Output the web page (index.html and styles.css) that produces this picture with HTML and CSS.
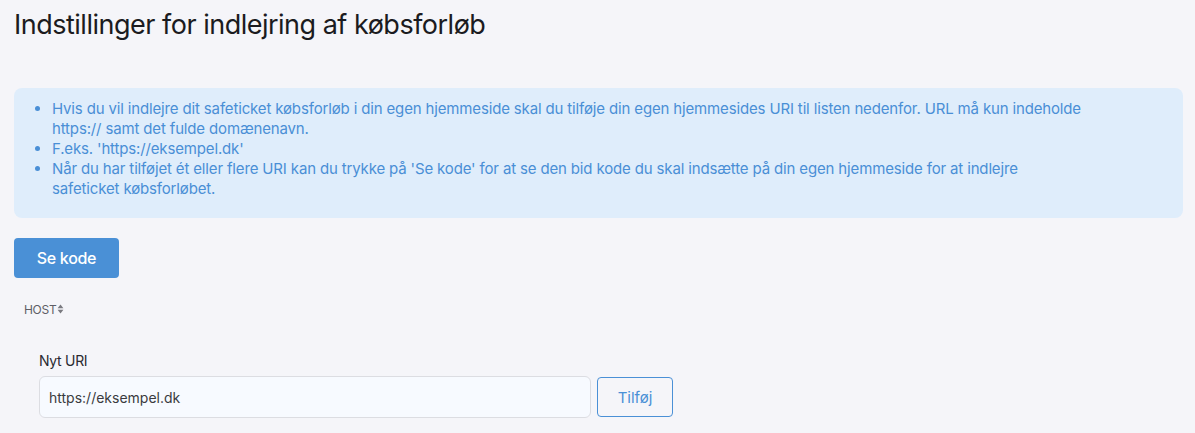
FILE: index.html
```html
<!DOCTYPE html>
<html lang="da">
<head>
<meta charset="utf-8">
<title>Indstillinger for indlejring af købsforløb</title>
<link rel="stylesheet" href="styles.css">
</head>
<body>
<main class="page">
  <h1 class="title">Indstillinger for indlejring af købsforløb</h1>
  <div class="alert">
    <ul class="alert-list">
      <li>Hvis du vil indlejre dit safeticket købsforløb i din egen hjemmeside skal du tilføje din egen hjemmesides URI til listen nedenfor. URL må kun indeholde https:// samt det fulde domænenavn.</li>
      <li>F.eks. 'https://eksempel.dk'</li>
      <li>Når du har tilføjet ét eller flere URI kan du trykke på 'Se kode' for at se den bid kode du skal indsætte på din egen hjemmeside for at indlejre safeticket købsforløbet.</li>
    </ul>
  </div>
  <button class="btn-primary" type="button">Se kode</button>
  <div class="table-head">
    <span class="th">HOST</span>
    <svg class="sort-icon" viewBox="0 0 8 12" width="7" height="10" aria-hidden="true"><path d="M4 0.5 L7.5 5 H0.5 Z M4 11.5 L7.5 7 H0.5 Z" fill="#7a7a80"/></svg>
  </div>
  <form class="new-uri">
    <label class="label" for="uri">Nyt URI</label>
    <div class="input-row">
      <input class="input" id="uri" type="text" placeholder="https://eksempel.dk">
      <button class="btn-outline" type="button">Tilføj</button>
    </div>
  </form>
</main>
</body>
</html>
```

FILE: styles.css
```css
* { box-sizing: border-box; }
html, body { margin: 0; padding: 0; }
body {
  background: #f5f5f9;
  font-family: "Inter", "Noto Sans", sans-serif;
  color: #1d1d22;
}
.page {
  padding: 8px 12px 0 14px;
}
.title {
  margin: 0;
  font-weight: 400;
  font-size: 27px;
  line-height: 34px;
  letter-spacing: -0.5px;
  color: #1b1b20;
}
.alert {
  margin-top: 46px;
  background: #dfedfb;
  border-radius: 8px;
  padding: 11px 95px 19px 20px;
  color: #4a8fd6;
  font-size: 15px;
  line-height: 20px;
  letter-spacing: -0.15px;
}
.alert-list {
  margin: 0;
  padding-left: 18px;
}
.btn-primary {
  margin-top: 20px;
  display: block;
  width: 105px;
  height: 40px;
  border: none;
  border-radius: 4px;
  background: #4a90d6;
  color: #fff;
  font-family: inherit;
  font-size: 16px;
  font-weight: 500;
  letter-spacing: -0.3px;
}
.table-head {
  margin-top: 23px;
  padding-left: 10px;
  display: flex;
  align-items: center;
  gap: 1px;
  height: 16px;
}
.th {
  font-size: 12px;
  font-weight: 400;
  color: #5e5e66;
  letter-spacing: -0.3px;
}
.new-uri {
  margin-top: 35px;
  padding-left: 25px;
}
.label {
  display: block;
  font-size: 14px;
  line-height: 18px;
  color: #2a2a30;
  letter-spacing: -0.3px;
}
.input-row {
  margin-top: 6px;
  display: flex;
  align-items: center;
  gap: 6px;
}
.input {
  width: 552px;
  height: 42px;
  border: 1px solid #dcdde2;
  border-radius: 6px;
  background: #f7faff;
  padding: 0 9px;
  font-family: "Inter", sans-serif;
  font-size: 14px;
  color: #333;
}
.input::placeholder { color: #3a3a40; }
.btn-outline {
  width: 76px;
  height: 40px;
  border: 1px solid #4a90d6;
  border-radius: 4px;
  background: transparent;
  color: #4a90d6;
  font-family: inherit;
  font-size: 15px;
}
```
